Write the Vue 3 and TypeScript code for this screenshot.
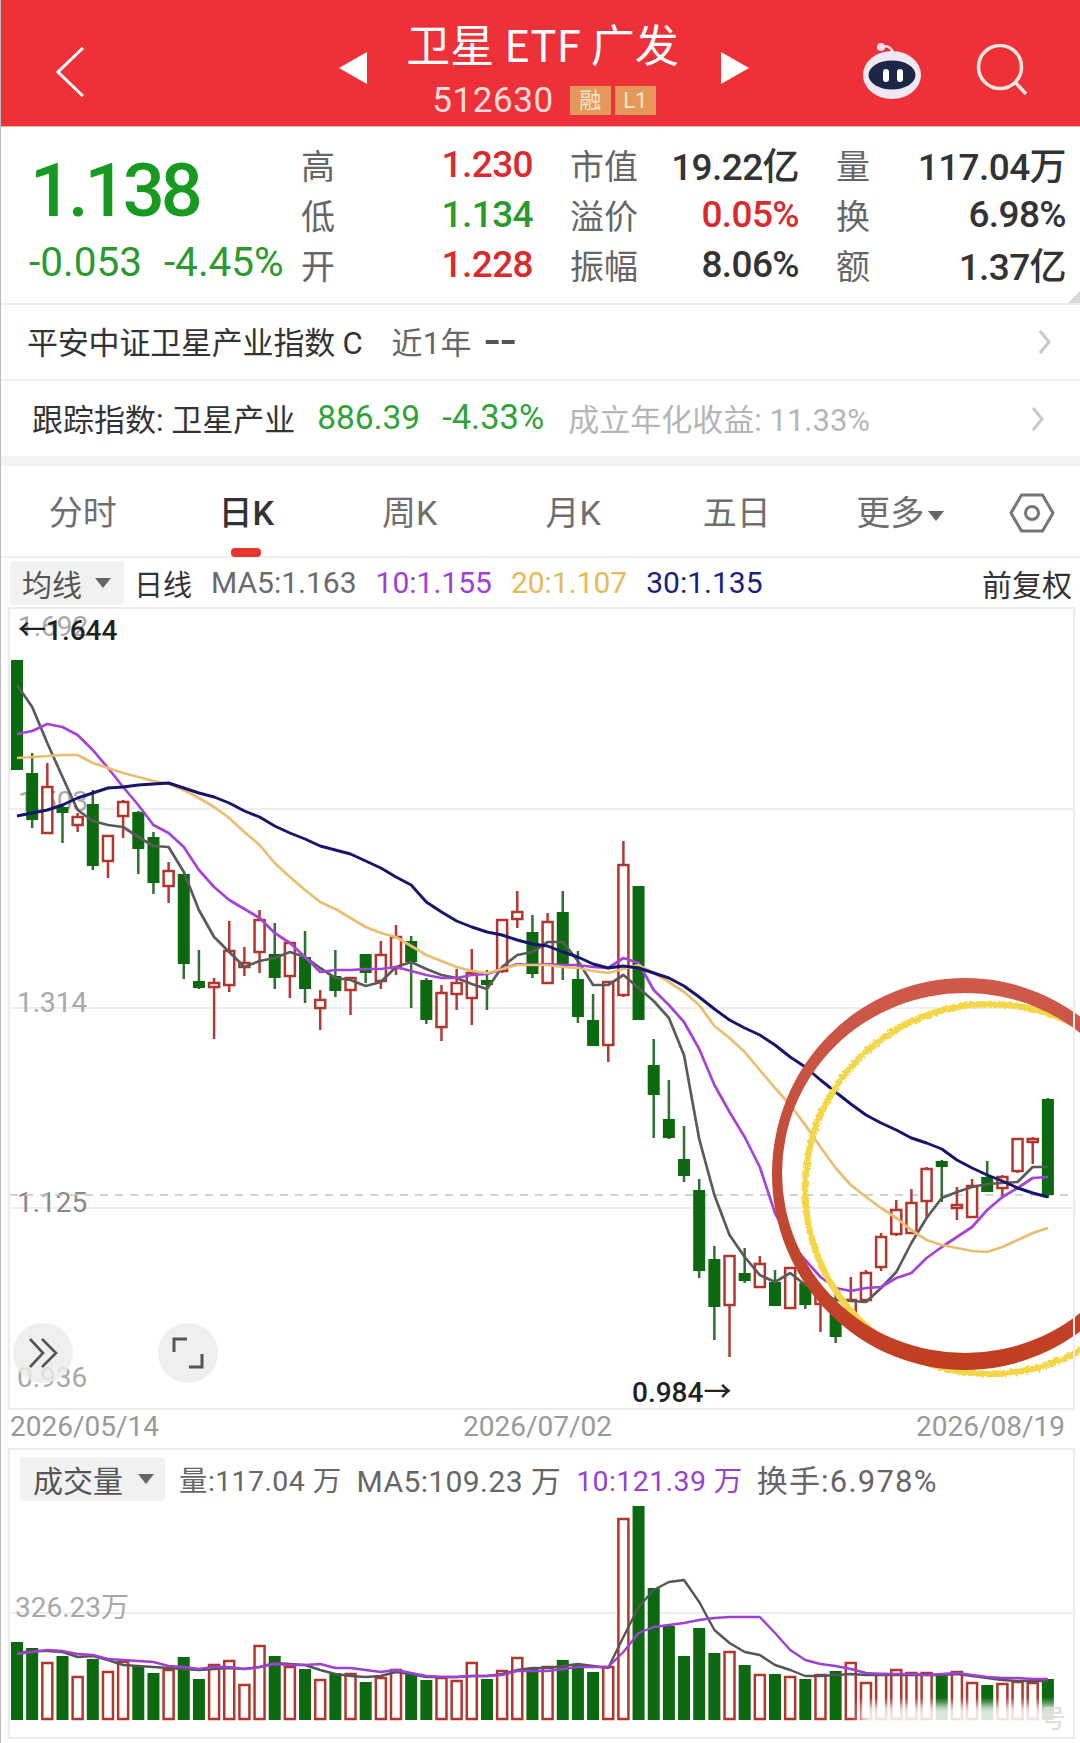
<script setup lang="ts">
import { computed } from 'vue'

/** 蜡烛图: [涨跌 0跌 1涨, 最高, 开收上沿, 开收下沿, 最低] (y 坐标按页面像素) */
type Candle = [number, number, number, number, number]

const candles: Candle[] = [
  [0, 660, 660, 770, 770], [0, 753, 773, 820, 828], [1, 763, 787, 833, 833], [0, 805, 807, 813, 843],
  [1, 813, 817, 825, 832], [0, 790, 804, 866, 870], [1, 836, 836, 861, 878], [1, 800, 802, 816, 838],
  [0, 811, 812, 849, 874], [0, 832, 837, 883, 894], [1, 862, 871, 886, 903], [0, 874, 874, 964, 979],
  [0, 950, 981, 988, 989], [1, 978, 983, 987, 1039], [1, 921, 951, 985, 992], [1, 947, 963, 967, 976],
  [1, 910, 920, 952, 973], [0, 923, 954, 978, 989], [1, 942, 943, 976, 998], [0, 931, 957, 989, 1003],
  [1, 990, 1000, 1008, 1030], [0, 950, 976, 991, 997], [1, 978, 978, 990, 1015], [0, 954, 954, 973, 983],
  [1, 941, 955, 981, 989], [1, 925, 937, 968, 975], [0, 936, 941, 962, 1008], [0, 978, 980, 1020, 1024],
  [1, 985, 993, 1027, 1041], [1, 969, 983, 994, 1010], [1, 949, 973, 998, 1025], [0, 970, 980, 985, 1010],
  [1, 920, 920, 971, 973], [1, 891, 912, 919, 928], [0, 915, 932, 974, 978], [1, 913, 922, 983, 983],
  [0, 891, 912, 965, 980], [0, 951, 979, 1017, 1023], [0, 994, 1020, 1046, 1046], [1, 982, 982, 1045, 1062],
  [1, 841, 865, 995, 997], [0, 886, 886, 1020, 1020], [0, 1039, 1065, 1095, 1138], [0, 1080, 1119, 1138, 1139],
  [0, 1126, 1159, 1176, 1182], [0, 1179, 1190, 1271, 1278], [0, 1246, 1259, 1307, 1340], [1, 1256, 1256, 1305, 1357],
  [0, 1248, 1273, 1281, 1283], [1, 1256, 1264, 1287, 1287], [0, 1270, 1282, 1306, 1306], [1, 1268, 1268, 1308, 1308],
  [0, 1280, 1283, 1305, 1309], [1, 1287, 1295, 1304, 1332], [0, 1293, 1307, 1337, 1343], [1, 1277, 1300, 1314, 1322],
  [1, 1270, 1273, 1300, 1303], [1, 1233, 1237, 1267, 1271], [1, 1200, 1210, 1234, 1236], [1, 1189, 1203, 1233, 1233],
  [1, 1167, 1169, 1201, 1217], [0, 1160, 1161, 1167, 1202], [1, 1187, 1205, 1208, 1220], [1, 1179, 1186, 1217, 1217],
  [0, 1161, 1177, 1192, 1192], [1, 1175, 1177, 1188, 1197], [1, 1139, 1139, 1171, 1173], [1, 1137, 1139, 1142, 1164],
  [0, 1098, 1099, 1195, 1198]
]

const ma5 = [
  685, 707, 743, 777, 810, 821, 825, 827, 837, 846, 847, 872, 910, 937, 952, 967, 961, 958, 952, 957, 968, 978, 980,
  986, 982, 967, 962, 969, 975, 978, 984, 989, 967, 955, 952, 942, 942, 961, 985, 985, 975, 988, 1001, 1018, 1055,
  1139, 1195, 1235, 1257, 1275, 1282, 1273, 1285, 1293, 1300, 1301, 1302, 1288, 1272, 1243, 1218, 1198, 1192, 1187,
  1184, 1183, 1182, 1167, 1167
]
const ma10 = [
  734, 731, 724, 727, 735, 750, 768, 787, 805, 825, 833, 847, 870, 887, 900, 909, 918, 933, 943, 957, 972, 970, 970,
  969, 969, 967, 971, 975, 978, 978, 975, 974, 969, 964, 965, 964, 965, 965, 967, 968, 958, 963, 990, 1005, 1022,
  1049, 1085, 1112, 1137, 1167, 1213, 1242, 1260, 1277, 1288, 1291, 1288, 1287, 1278, 1273, 1258, 1247, 1237, 1227,
  1210, 1197, 1188, 1178, 1177
]
const ma20 = [
  758, 757, 756, 755, 755, 763, 768, 773, 777, 781, 784, 790, 798, 807, 818, 832, 845, 863, 877, 890, 902, 909, 918,
  927, 933, 937, 946, 955, 961, 967, 971, 973, 969, 965, 965, 965, 967, 968, 971, 973, 969, 965, 973, 982, 992, 1005,
  1026, 1038, 1052, 1070, 1088, 1105, 1125, 1147, 1168, 1185, 1197, 1208, 1218, 1230, 1240, 1245, 1248, 1251, 1252,
  1247, 1240, 1233, 1228
]
const ma30 = [
  816, 813, 810, 805, 798, 793, 788, 787, 785, 784, 783, 788, 793, 797, 803, 811, 817, 826, 833, 839, 846, 850, 854,
  861, 868, 877, 885, 902, 912, 921, 927, 932, 935, 940, 944, 946, 952, 957, 964, 968, 966, 968, 973, 978, 986, 997,
  1009, 1020, 1028, 1035, 1045, 1057, 1067, 1080, 1092, 1104, 1115, 1123, 1130, 1138, 1143, 1149, 1160, 1168, 1175,
  1181, 1188, 1193, 1197
]

/** 成交量柱: [涨跌, 柱顶 y] */
const volumes: [number, number][] = [
  [0, 1642], [0, 1648], [1, 1663], [0, 1656], [1, 1677], [0, 1659], [1, 1672], [1, 1662], [0, 1666], [0, 1673],
  [1, 1670], [0, 1657], [0, 1679], [1, 1665], [1, 1661], [1, 1685], [1, 1646], [0, 1656], [1, 1667], [0, 1669],
  [1, 1680], [0, 1673], [1, 1674], [0, 1682], [1, 1678], [1, 1670], [0, 1673], [0, 1680], [1, 1678], [1, 1681],
  [1, 1663], [0, 1679], [1, 1671], [1, 1658], [0, 1668], [1, 1667], [0, 1660], [0, 1664], [0, 1672], [1, 1667],
  [1, 1519], [0, 1506], [0, 1588], [0, 1626], [0, 1656], [0, 1628], [0, 1653], [1, 1652], [0, 1665], [1, 1675],
  [0, 1674], [1, 1677], [0, 1679], [1, 1675], [0, 1671], [1, 1663], [1, 1683], [1, 1674], [1, 1670], [1, 1673],
  [1, 1673], [0, 1674], [1, 1672], [1, 1683], [0, 1685], [1, 1684], [1, 1682], [1, 1683], [0, 1679]
]
const volMa5 = [
  1653, 1651, 1651, 1652, 1657, 1656, 1660, 1665, 1666, 1667, 1668, 1669, 1670, 1669, 1668, 1669, 1667, 1663, 1664,
  1665, 1670, 1674, 1676, 1677, 1676, 1672, 1674, 1677, 1677, 1677, 1676, 1676, 1674, 1670, 1668, 1668, 1666, 1664,
  1666, 1668, 1637, 1607, 1590, 1582, 1580, 1602, 1630, 1643, 1652, 1655, 1665, 1670, 1676, 1676, 1675, 1674, 1675,
  1675, 1675, 1675, 1675, 1675, 1674, 1676, 1678, 1680, 1681, 1681, 1681
]
const volMa10 = [
  1654, 1652, 1650, 1651, 1654, 1655, 1659, 1660, 1661, 1662, 1666, 1667, 1669, 1667, 1667, 1669, 1667, 1664, 1665,
  1665, 1664, 1668, 1668, 1670, 1672, 1670, 1673, 1676, 1677, 1677, 1676, 1676, 1675, 1671, 1671, 1671, 1669, 1667,
  1667, 1667, 1652, 1633, 1627, 1625, 1623, 1620, 1618, 1617, 1617, 1617, 1633, 1650, 1660, 1664, 1666, 1669, 1673,
  1674, 1674, 1674, 1675, 1674, 1673, 1675, 1677, 1678, 1678, 1679, 1679
]

const stats = [
  { label: '高', value: '1.230', color: 'red', label2: '市值', value2: '19.22亿', color2: '', label3: '量', value3: '117.04万' },
  { label: '低', value: '1.134', color: 'green', label2: '溢价', value2: '0.05%', color2: 'red', label3: '换', value3: '6.98%' },
  { label: '开', value: '1.228', color: 'red', label2: '振幅', value2: '8.06%', color2: '', label3: '额', value3: '1.37亿' }
]

const tabs = ['分时', '日K', '周K', '月K', '五日']

const xAt = (i: number) => 17 + i * 15.16
const toPoints = (ys: number[]) => ys.map((y, i) => `${xAt(i).toFixed(1)},${y}`).join(' ')

const maLines = computed(() => [
  { key: 'ma5', color: '#5a5a5a', width: 2.7, points: toPoints(ma5) },
  { key: 'ma10', color: '#a543d8', width: 2.7, points: toPoints(ma10) },
  { key: 'ma20', color: '#ebbd70', width: 2.7, points: toPoints(ma20) },
  { key: 'ma30', color: '#15156c', width: 2.9, points: toPoints(ma30) }
])
</script>

<template>
  <div class="page">
    <!-- 顶部标题栏 -->
    <header class="topbar">
      <svg class="back" viewBox="0 0 28 50" width="28" height="50">
        <path d="M27 1 L2 25 L27 49" fill="none" stroke="#fff" stroke-width="3" />
      </svg>
      <div class="title-wrap">
        <span class="tri tri-left"></span>
        <div class="title-mid">
          <div class="title">卫星 ETF 广发</div>
          <div class="code">
            <span class="code-num">512630</span>
            <span class="badge">融</span>
            <span class="badge">L1</span>
          </div>
        </div>
        <span class="tri tri-right"></span>
      </div>
      <svg class="robot" viewBox="0 0 64 60" width="64" height="60">
        <path d="M23 7 C27 5 30 7 33 12" fill="none" stroke="#f3dfe6" stroke-width="2.5" />
        <circle cx="21" cy="7" r="4" fill="#f6dde2" />
        <ellipse cx="32" cy="35" rx="29" ry="24" fill="#f0e6f4" />
        <ellipse cx="32" cy="35" rx="23.5" ry="14.5" fill="#1c2646" />
        <rect x="23" y="29" width="6" height="13" rx="3" fill="#fff" />
        <rect x="37" y="29" width="6" height="13" rx="3" fill="#fff" />
      </svg>
      <svg class="search" viewBox="0 0 54 54" width="54" height="54">
        <circle cx="24" cy="24" r="21.5" fill="none" stroke="#fde6e4" stroke-width="3.5" />
        <path d="M39 39 L50 51" stroke="#fde6e4" stroke-width="3.5" fill="none" />
      </svg>
    </header>

    <!-- 行情 -->
    <section class="quote">
      <div class="price-box">
        <div class="price">1.138</div>
        <div class="change">
          <span>-0.053</span>
          <span>-4.45%</span>
        </div>
      </div>
      <div class="stats">
        <template v-for="row in stats" :key="row.label">
          <div class="stat">
            <span class="stat-label">{{ row.label }}</span>
            <span class="stat-value" :class="row.color">{{ row.value }}</span>
          </div>
          <div class="stat">
            <span class="stat-label">{{ row.label2 }}</span>
            <span class="stat-value" :class="row.color2">{{ row.value2 }}</span>
          </div>
          <div class="stat">
            <span class="stat-label">{{ row.label3 }}</span>
            <span class="stat-value">{{ row.value3 }}</span>
          </div>
        </template>
      </div>
      <span class="corner"></span>
    </section>

    <!-- 关联基金 -->
    <div class="link-row fund-row">
      <span class="fund-name">平安中证卫星产业指数 C</span>
      <span class="fund-year">近1年</span>
      <span class="fund-dash">--</span>
      <svg class="chev" viewBox="0 0 14 24" width="14" height="24"><path d="M2 1 L11 12 L2 23" fill="none" stroke="#c9c9c9" stroke-width="3" /></svg>
    </div>
    <div class="link-row index-row">
      <span class="index-name">跟踪指数: 卫星产业</span>
      <span class="index-num">886.39</span>
      <span class="index-pct">-4.33%</span>
      <span class="index-year">成立年化收益: 11.33%</span>
      <svg class="chev chev2" viewBox="0 0 14 24" width="14" height="24"><path d="M2 1 L11 12 L2 23" fill="none" stroke="#c9c9c9" stroke-width="3" /></svg>
    </div>
    <div class="band"></div>

    <!-- 周期 tab -->
    <nav class="tabs">
      <div v-for="tab in tabs" :key="tab" class="tab" :class="{ active: tab === '日K' }">{{ tab }}</div>
      <div class="tab">更多<i class="caret"></i></div>
      <svg class="hex" viewBox="0 0 46 40" width="46" height="40">
        <path d="M2 20 L12.5 2 L33.5 2 L44 20 L33.5 38 L12.5 38 Z" fill="none" stroke="#777" stroke-width="3" />
        <circle cx="23" cy="20" r="6.5" fill="none" stroke="#777" stroke-width="3" />
      </svg>
    </nav>

    <!-- 均线信息 -->
    <div class="ma-row">
      <div class="select">均线<i class="caret"></i></div>
      <span class="ma-day">日线</span>
      <span class="ma-gray">MA5:1.163</span>
      <span class="ma-purple">10:1.155</span>
      <span class="ma-orange">20:1.107</span>
      <span class="ma-navy">30:1.135</span>
      <span class="ma-fq">前复权</span>
    </div>

    <!-- K线 -->
    <div class="chart-box">
      <svg class="kline" viewBox="0 609 1063 799" width="1063" height="799">
        <defs>
          <filter id="rough" x="-5%" y="-5%" width="110%" height="110%">
            <feTurbulence type="fractalNoise" baseFrequency="0.35" numOctaves="2" seed="4" />
            <feDisplacementMap in="SourceGraphic" scale="5" />
          </filter>
          <filter id="soft" x="-2%" y="-2%" width="104%" height="104%">
            <feGaussianBlur stdDeviation="0.6" />
          </filter>
          <linearGradient id="ringRed" x1="0" y1="0" x2="0" y2="1">
            <stop offset="0" stop-color="#cf5a4a" />
            <stop offset="0.5" stop-color="#c24a36" />
            <stop offset="1" stop-color="#c23e22" />
          </linearGradient>
        </defs>
        <line v-for="y in [809, 1008, 1208]" :key="y" x1="0" x2="1063" :y1="y" :y2="y" class="grid" />
        <text class="axis" x="8" y="636">1.692</text>
        <text class="axis" x="8" y="811">1.503</text>
        <text class="axis" x="7" y="1012">1.314</text>
        <text class="axis dark" x="7" y="1212">1.125</text>
        <text class="axis" x="7" y="1387">0.936</text>
        <line x1="0" x2="1063" y1="1195" y2="1195" class="dash" />

        <g v-for="(c, i) in candles" :key="i">
          <template v-if="c[0] === 0">
            <line :x1="xAt(i) - 10" :x2="xAt(i) - 10" :y1="c[1]" :y2="c[4]" class="wick-g" />
            <rect :x="xAt(i) - 16" :y="c[2]" width="12" :height="c[3] - c[2]" class="body-g" />
          </template>
          <template v-else>
            <line :x1="xAt(i) - 10" :x2="xAt(i) - 10" :y1="c[1]" :y2="c[2]" class="wick-r" />
            <line :x1="xAt(i) - 10" :x2="xAt(i) - 10" :y1="c[3]" :y2="c[4]" class="wick-r" />
            <rect :x="xAt(i) - 15" :y="c[2]" width="10" :height="c[3] - c[2]" class="body-r" />
          </template>
        </g>

        <g transform="translate(-10 0)">
          <polyline
            v-for="l in maLines"
            :key="l.key"
            :points="l.points"
            :stroke="l.color"
            :stroke-width="l.width"
            class="ma-line"
          />
        </g>

        <text class="peak" x="8" y="640">←1.644</text>
        <text class="peak" x="622" y="1402">0.984→</text>

        <!-- 手绘圈 -->
        <ellipse cx="980" cy="1189" rx="185" ry="185" class="ring-yellow" filter="url(#rough)" />
        <path
          d="M762 1174 A193 196 0 1 1 1148 1174 A193 196 0 1 1 762 1174 Z M772 1173 A183 180 0 1 0 1138 1173 A183 180 0 1 0 772 1173 Z"
          fill="url(#ringRed)"
          fill-rule="evenodd"
          filter="url(#soft)"
        />
      </svg>
      <div class="round-btn btn-expand">
        <svg viewBox="0 0 30 30" width="30" height="30"><path d="M2 1 L15 15 L2 29 M14 1 L28 15 L14 29" fill="none" stroke="#555" stroke-width="2.6" /></svg>
      </div>
      <div class="round-btn btn-full">
        <svg viewBox="0 0 32 32" width="32" height="32"><path d="M2 15 L2 2 L15 2 M30 17 L30 30 L17 30" fill="none" stroke="#555" stroke-width="3" /></svg>
      </div>
    </div>

    <div class="dates">
      <span>2026/05/14</span>
      <span>2026/07/02</span>
      <span>2026/08/19</span>
    </div>

    <!-- 成交量 -->
    <div class="vol-box">
      <div class="vol-head">
        <div class="select select-vol">成交量<i class="caret"></i></div>
        <span class="vol-item vol-first">量:117.04 万</span>
        <span class="vol-item">MA5:109.23 万</span>
        <span class="vol-item vol-purple">10:121.39 万</span>
        <span class="vol-item vol-turn">换手:6.978%</span>
      </div>
      <svg class="vol-chart" viewBox="0 1505 1063 232" width="1063" height="232">
        <defs>
          <filter id="smear" x="-5%" y="-20%" width="110%" height="140%">
            <feGaussianBlur stdDeviation="4" />
          </filter>
        </defs>
        <line x1="0" x2="1063" y1="1613" y2="1613" class="grid" />
        <text class="axis" x="5" y="1617">326.23万</text>
        <g v-for="(v, i) in volumes" :key="i">
          <rect v-if="v[0] === 0" :x="xAt(i) - 16" :y="v[1]" width="12" :height="1720 - v[1]" class="body-g" />
          <rect v-else :x="xAt(i) - 15" :y="v[1]" width="10" :height="1719 - v[1]" class="body-r" />
        </g>
        <g transform="translate(-10 0)">
          <polyline :points="toPoints(volMa5)" stroke="#555" stroke-width="2.4" class="ma-line" />
          <polyline :points="toPoints(volMa10)" stroke="#a040d0" stroke-width="2.4" class="ma-line" />
        </g>
        <rect x="850" y="1704" width="210" height="30" fill="#fff" opacity="0.85" filter="url(#smear)" />
        <text class="mark" x="1030" y="1728">号</text>
      </svg>
    </div>
  </div>
</template>

<style>
html,
body {
  margin: 0;
  background: #fff;
}
</style>

<style scoped>
.page {
  position: relative;
  width: 1079px;
  height: 1743px;
  overflow: hidden;
  background: #fff;
  border-left: 1px solid #bdbdbd;
  font-family: Roboto, "Noto Sans CJK SC", sans-serif;
  color: #333;
}

/* 顶部 */
.topbar {
  display: flex;
  align-items: center;
  height: 127px;
  margin-left: -1px;
  background: #ee3139;
  border-bottom: 1px solid #e8b4b4;
  box-sizing: border-box;
}
.back {
  margin: 18px 0 0 56px;
}
.title-wrap {
  display: flex;
  align-items: center;
  margin-left: 255px;
}
.tri {
  width: 0;
  height: 0;
  margin-top: 9px;
  border-top: 16px solid transparent;
  border-bottom: 16px solid transparent;
}
.tri-left {
  border-right: 28px solid #fff;
}
.tri-right {
  border-left: 28px solid #fff;
}
.title-mid {
  width: 354px;
  padding-top: 6px;
  text-align: center;
}
.title {
  font-family: "Noto Sans CJK SC", sans-serif;
  font-size: 44px;
  line-height: 54px;
  margin-top: 2px;
  margin-left: -3px;
  color: #fff;
}
.code {
  display: flex;
  justify-content: center;
  align-items: center;
  gap: 4px;
  margin-top: 13px;
  height: 36px;
}
.code-num {
  font-size: 35px;
  letter-spacing: 0.6px;
  color: #fbdcdc;
  margin-right: 12px;
}
.badge {
  width: 41px;
  height: 29px;
  line-height: 29px;
  background: #e5985a;
  color: #fce6cf;
  font-size: 22px;
  text-align: center;
}
.robot {
  margin-left: 111px;
  margin-top: 13px;
}
.search {
  margin-left: 52px;
  margin-top: 14px;
}

/* 行情 */
.quote {
  position: relative;
  display: flex;
  height: 178px;
  border-bottom: 2px solid #eeeeee;
  box-sizing: border-box;
}
.price-box {
  width: 300px;
  padding-left: 28px;
  box-sizing: border-box;
  color: #179a20;
}
.price {
  font-size: 74px;
  line-height: 84px;
  font-weight: 500;
  letter-spacing: -4px;
  margin-top: 22px;
  margin-left: 1px;
}
.change {
  display: flex;
  gap: 22px;
  font-size: 40.5px;
  line-height: 44px;
  margin-top: 7px;
  margin-left: 0;
  color: #2a9a2e;
  white-space: nowrap;
}
.stats {
  display: grid;
  grid-template-columns: 232px 229px 230px;
  column-gap: 37px;
  grid-auto-rows: 50px;
  margin-top: 12px;
}
.stat {
  display: flex;
  justify-content: space-between;
  align-items: center;
  white-space: nowrap;
}
.stat-label {
  font-size: 34px;
  color: #666;
}
.stat-value {
  font-size: 37px;
  font-weight: 500;
  letter-spacing: -0.6px;
  color: #333;
}
.stat-value.red {
  color: #d92a2e;
}
.stat-value.green {
  color: #2a9a2e;
}
.corner {
  position: absolute;
  right: 0;
  bottom: 0;
  width: 0;
  height: 0;
  border-left: 12px solid transparent;
  border-bottom: 12px solid #d8d8d8;
}

/* 关联行 */
.link-row {
  position: relative;
  display: flex;
  align-items: center;
  white-space: nowrap;
}
.fund-row {
  height: 76px;
  padding-left: 26px;
  padding-bottom: 4px;
  box-sizing: border-box;
  border-bottom: 2px solid #eeeeee;
}
.fund-name {
  font-size: 31px;
  letter-spacing: -0.2px;
  color: #333;
}
.fund-year {
  font-size: 31px;
  color: #666;
  margin-left: 29px;
  letter-spacing: 0.3px;
}
.fund-dash {
  font-size: 54px;
  line-height: 1;
  margin-left: 13px;
  margin-top: 0;
  color: #555;
  letter-spacing: 1px;
}
.chev {
  position: absolute;
  right: 28px;
  top: 50%;
  margin-top: -12px;
}
.chev2 {
  right: 35px;
}
.index-row {
  height: 75px;
  padding-left: 31px;
  padding-bottom: 3px;
  box-sizing: border-box;
}
.index-name {
  font-size: 31px;
  color: #333;
}
.index-num {
  font-size: 33.5px;
  color: #2fa338;
  margin-left: 22px;
}
.index-pct {
  font-size: 34.5px;
  color: #2fa338;
  margin-left: 22px;
}
.index-year {
  font-size: 31px;
  color: #b5b5b5;
  margin-left: 24px;
}
.band {
  height: 10px;
  background: #f3f3f3;
}

/* tab */
.tabs {
  position: relative;
  display: flex;
  align-items: center;
  height: 92px;
  padding-left: 0;
  border-bottom: 2px solid #eeeeee;
  box-sizing: border-box;
}
.tab {
  position: relative;
  width: 163.5px;
  margin-top: -2px;
  text-align: center;
  font-size: 34px;
  color: #6e6e6e;
}
.tab.active {
  color: #333;
  font-weight: 500;
}
.tab.active::after {
  content: "";
  position: absolute;
  left: 66px;
  bottom: -22px;
  width: 30px;
  height: 9px;
  border-radius: 4px;
  background: #e5372f;
}
.tab .caret {
  margin-left: 4px;
}
.caret {
  display: inline-block;
  width: 0;
  height: 0;
  vertical-align: middle;
  border-left: 8px solid transparent;
  border-right: 8px solid transparent;
  border-top: 10px solid #666;
}
.hex {
  position: absolute;
  left: 1008px;
  top: 27px;
}

/* 均线行 */
.ma-row {
  display: flex;
  align-items: center;
  height: 51px;
  padding-left: 9px;
  padding-bottom: 2px;
  box-sizing: border-box;
  font-size: 30px;
  white-space: nowrap;
}
.select {
  display: flex;
  align-items: center;
  justify-content: space-between;
  width: 114px;
  height: 44px;
  padding: 0 13px 0 12px;
  box-sizing: border-box;
  background: #f2f2f2;
  border-radius: 4px;
  color: #555;
  font-size: 30px;
}
.ma-day {
  margin-left: 10px;
  font-size: 29px;
  color: #333;
}
.ma-gray {
  margin-left: 19px;
  color: #6a6a6a;
}
.ma-purple {
  margin-left: 19px;
  color: #a040d0;
}
.ma-orange {
  margin-left: 19px;
  color: #e6b958;
}
.ma-navy {
  margin-left: 19px;
  color: #1d1d80;
}
.ma-fq {
  margin-left: auto;
  margin-right: 8px;
  color: #333;
  font-size: 30px;
}

/* 图表 */
.chart-box {
  position: relative;
  width: 1063px;
  height: 799px;
  margin: 0 0 0 9px;
  outline: 2px solid #ececec;
}
.kline {
  display: block;
  overflow: visible;
}
.grid {
  stroke: #eeeeee;
  stroke-width: 2;
}
.dash {
  stroke: #c4c4be;
  stroke-width: 1.6;
  stroke-dasharray: 8 7;
}
.axis {
  font-size: 28px;
  fill: #a8a8a8;
}
.axis.dark {
  fill: #888;
}
.peak {
  font-size: 28px;
  font-weight: 500;
  fill: #222;
}
.wick-g {
  stroke: #2f6f2f;
  stroke-width: 2.5;
}
.wick-r {
  stroke: #b23a32;
  stroke-width: 2.5;
}
.body-g {
  fill: #0c690f;
}
.body-r {
  fill: #fff;
  stroke: #b3362c;
  stroke-width: 2.5;
}
.ma-line {
  fill: none;
  stroke-linejoin: round;
}
.ring-yellow {
  fill: none;
  stroke: #f3d748;
  stroke-width: 6.5;
}
.round-btn {
  position: absolute;
  display: flex;
  align-items: center;
  justify-content: center;
  width: 60px;
  height: 60px;
  border-radius: 50%;
  background: rgba(236, 236, 236, 0.82);
}
.btn-expand {
  left: 3px;
  top: 714px;
}
.btn-full {
  left: 148px;
  top: 714px;
}

.dates {
  display: flex;
  justify-content: space-between;
  height: 42px;
  line-height: 38px;
  padding: 0 15px 0 9px;
  font-size: 28px;
  color: #999;
}

/* 成交量 */
.vol-box {
  width: 1063px;
  height: 287px;
  margin-left: 9px;
  outline: 2px solid #ececec;
}
.vol-head {
  display: flex;
  align-items: center;
  height: 55px;
  padding-left: 10px;
  padding-top: 2px;
  box-sizing: border-box;
  white-space: nowrap;
}
.select-vol {
  width: 145px;
  padding: 0 11px 0 13px;
  font-size: 30px;
}
.vol-item {
  margin-left: 15px;
  font-size: 30px;
  letter-spacing: 0.4px;
  color: #666;
}
.vol-first {
  margin-left: 14px;
  font-size: 28.5px;
}
.vol-purple {
  font-size: 28.5px;
  color: #9a3fd0;
}
.vol-turn {
  margin-left: 14px;
  font-size: 31px;
  letter-spacing: 1.2px;
}
.vol-chart {
  display: block;
}
.mark {
  font-size: 26px;
  fill: #ddd;
}
</style>
